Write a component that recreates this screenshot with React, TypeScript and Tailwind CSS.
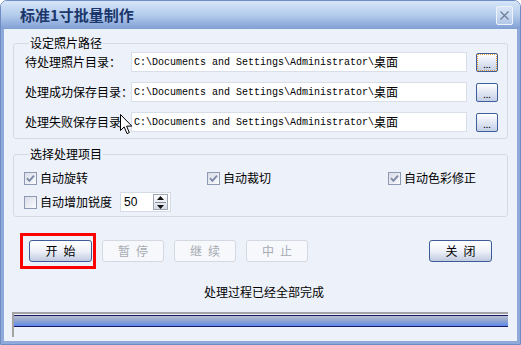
const PATH = 'C:\\Documents and Settings\\Administrator\\'

function Check({ checked }: { checked?: boolean }) {
    return (
        <span className="flex h-[13px] w-[13px] shrink-0 items-center justify-center border border-[#8e9ab2] bg-linear-to-br from-[#d9dde8] to-[#fafbfd]">
            {checked && (
                <svg width="9" height="9" viewBox="0 0 9 9">
                    <path d="M1 4.2 L3.4 6.8 L8 1.6" stroke="#7d89a6" strokeWidth="1.9" fill="none" />
                </svg>
            )}
        </span>
    )
}

function Btn({ a, b, disabled, wide }: { a: string; b: string; disabled?: boolean; wide?: boolean }) {
    return (
        <button
            className={`flex h-[22px] items-center justify-center gap-[6px] rounded-[3px] border text-[12px] leading-none ${wide ? 'w-[63px]' : 'w-[62px]'} ${
                disabled
                    ? 'border-[#d3d8e2] bg-[#f6f8fb] text-[#a7abb3]'
                    : 'border-[#3d5c97] bg-linear-to-b from-white via-[#eef1f8] to-[#c1cbe0] text-black'
            }`}
        >
            <span>{a}</span>
            <span>{b}</span>
        </button>
    )
}

function PathRow({ label, focused }: { label: string; focused?: boolean }) {
    return (
        <div className="flex h-[20px] items-center">
            <span className="w-[107px] shrink-0 whitespace-nowrap pl-[1px] text-[12px]">{label}</span>
            <div className="flex h-[20px] w-[336px] items-center whitespace-nowrap border border-[#d9dfea] bg-white pl-[2px] text-[10px] font-['Liberation_Mono','Noto_Sans_CJK_SC',monospace]">
                {PATH}
                <span className="text-[12px] font-['Noto_Sans_CJK_SC',sans-serif]">桌面</span>
            </div>
            <button
                className={`ml-[9px] flex h-[19px] w-[22px] items-end justify-center rounded-[2px] border bg-linear-to-b from-white to-[#c4cfe6] pb-[2px] text-[9px] leading-none ${
                    focused ? 'border-[#3f5f9c] outline-1 outline-dotted -outline-offset-2 outline-[#e29a2c]' : 'border-[#3f5f9c]'
                }`}
            >
                ...
            </button>
        </div>
    )
}

export default function App() {
    return (
        <div className="relative flex h-[345px] w-[521px] flex-col overflow-hidden rounded-t-[7px] border border-[#6f8cc4] bg-[#edf1f9] font-['Noto_Sans_CJK_SC','Liberation_Sans',sans-serif] text-black">
            <div className="flex h-[28px] shrink-0 items-center justify-between bg-linear-to-b from-[#d6e6f8] via-[#b3cbec] to-[#819fd4] pl-[19px] pr-[7px]">
                <span className="text-[15px] font-bold text-[#1b376b]">标准1寸批量制作</span>
                <button className="flex h-[19px] w-[17px] items-center justify-center rounded-[2px] border border-[#eef3fb] bg-white/30">
                    <svg width="11" height="11" viewBox="0 0 11 11">
                        <path d="M1.5 1.5 L9.5 9.5 M9.5 1.5 L1.5 9.5" stroke="#6c7b98" strokeWidth="1.2" />
                    </svg>
                </button>
            </div>

            <div className="flex flex-1 flex-col border-x-[3px] border-b-[3px] border-[#8ea9da] px-[9px] pt-[7px]">
                <fieldset className="rounded-[3px] border border-[#d3dae6] pb-[6px] pl-[10px] pt-[2px]">
                    <legend className="ml-[5px] px-[1px] text-[12px] leading-[14px]">设定照片路径</legend>
                    <div className="flex flex-col gap-[10px]">
                        <PathRow label="待处理照片目录：" focused />
                        <PathRow label="处理成功保存目录：" />
                        <PathRow label="处理失败保存目录：" />
                    </div>
                </fieldset>

                <fieldset className="mt-[8px] rounded-[3px] border border-[#d3dae6] pb-[4px] pl-[10px] pt-[8px]">
                    <legend className="ml-[5px] px-[1px] text-[12px] leading-[14px]">选择处理项目</legend>
                    <div className="grid h-[16px] grid-cols-[183px_181px_1fr] items-center text-[12px]">
                        <label className="flex items-center gap-[3px]"><Check checked />自动旋转</label>
                        <label className="flex items-center gap-[3px]"><Check checked />自动裁切</label>
                        <label className="flex items-center gap-[3px]"><Check checked />自动色彩修正</label>
                    </div>
                    <div className="mt-[7px] flex h-[20px] items-center text-[12px]">
                        <label className="flex items-center gap-[3px]"><Check />自动增加锐度</label>
                        <div className="ml-[8px] flex h-[20px] w-[51px] items-center border border-[#d6dce6] bg-white">
                            <span className="pl-[3px] font-['Liberation_Sans',sans-serif] text-[12px]">50</span>
                            <div className="ml-auto mr-[2px] flex h-[16px] w-[15px] flex-col items-center justify-center gap-[2px] border border-[#9ea6b6] bg-linear-to-b from-white to-[#d5dae4]">
                                <svg width="7" height="4" viewBox="0 0 7 4"><path d="M0 4 L3.5 0 L7 4 Z" fill="#111" /></svg>
                                <span className="h-px w-[11px] bg-[#8a90a0]" />
                                <svg width="7" height="4" viewBox="0 0 7 4"><path d="M0 0 L3.5 4 L7 0 Z" fill="#111" /></svg>
                            </div>
                        </div>
                    </div>
                </fieldset>

                <div className="mt-[23px] flex items-center justify-between px-[16px]">
                    <div className="flex gap-[10px]">
                        <div className="relative">
                            <Btn a="开" b="始" wide />
                            <div className="pointer-events-none absolute -bottom-[7px] -left-[9px] -right-[4px] -top-[7px] border-[3px] border-[#f00]" />
                        </div>
                        <Btn a="暂" b="停" disabled />
                        <Btn a="继" b="续" disabled />
                        <Btn a="中" b="止" disabled />
                    </div>
                    <Btn a="关" b="闭" wide />
                </div>

                <div className="mt-[23px] pl-[7px] text-center text-[12px] leading-[14px]">处理过程已经全部完成</div>

                <div className="-ml-[1px] mt-[13px] h-[25px] border-l-2 border-t-2 border-[#a4a4a4] pt-px">
                    <div className="h-[12px] border-y border-[#1d1968] bg-linear-to-b from-[#b7bfce] via-[#8fa2d0] to-[#5b8ae9]" />
                </div>
            </div>

            <svg className="pointer-events-none absolute left-[119px] top-[113px]" width="13" height="21" viewBox="0 0 13 21">
                <path d="M0.5 0.5 L0.5 16.5 L4.2 12.9 L7 19.6 L9.3 18.6 L6.6 12.1 L11.8 12.1 Z" fill="white" stroke="black" strokeWidth="1" />
            </svg>
        </div>
    )
}
